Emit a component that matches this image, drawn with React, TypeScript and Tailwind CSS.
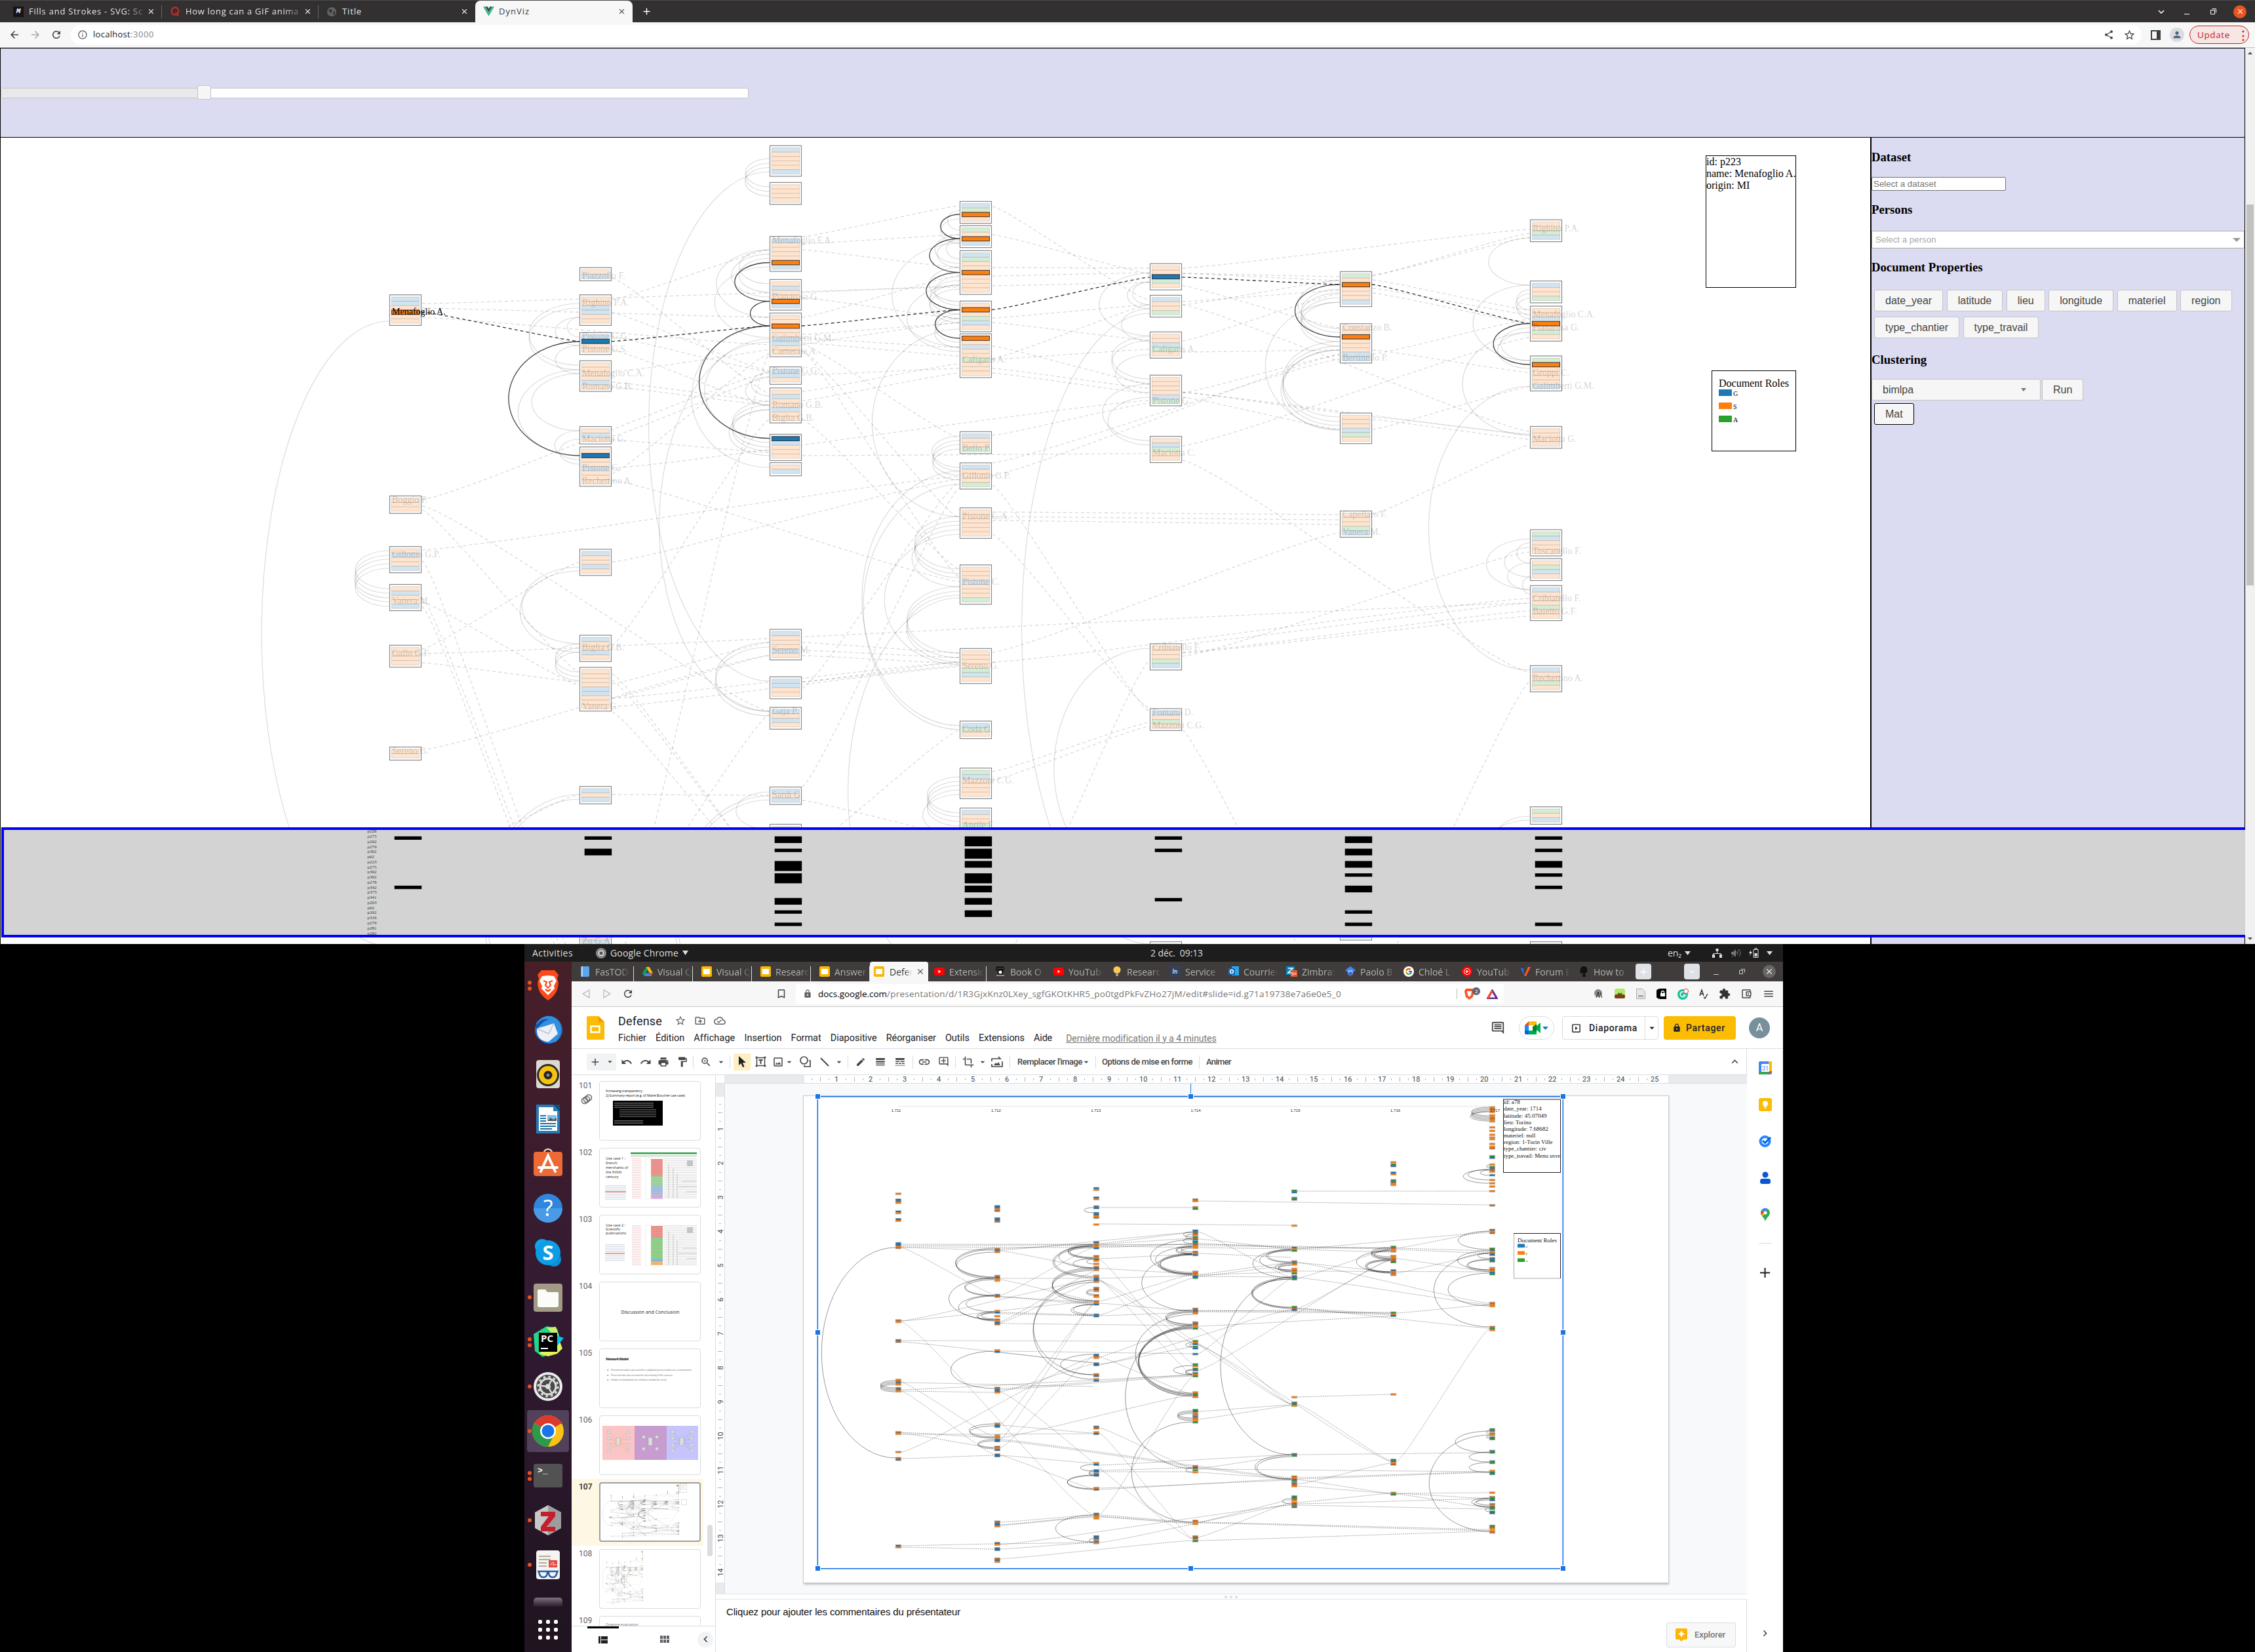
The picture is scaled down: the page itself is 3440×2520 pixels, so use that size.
import { useLayoutEffect, useRef, useState, type ReactNode } from "react";
import {
  MdAdd, MdArrowBack, MdArrowDropDown, MdArrowForward, MdClose, MdCrop, MdEdit,
  MdExtension, MdFormatPaint, MdInfoOutline, MdLineStyle, MdLineWeight, MdLink, MdLock,
  MdOutlineAddComment, MdOutlineCloudDone, MdOutlineDriveFileMove, MdOutlineImage,
  MdOutlineInsertComment, MdPerson, MdPrint, MdRedo, MdRefresh, MdShare, MdStarBorder,
  MdUndo, MdZoomIn, MdKeyboardArrowDown, MdKeyboardArrowLeft, MdKeyboardArrowRight, MdKeyboardArrowUp,
  MdOutlineBookmarkBorder, MdMenu, MdOutlineSlideshow, MdOutlineAccountBalanceWallet, MdLightbulb,
} from "react-icons/md";
import { FcGoogle } from "react-icons/fc";

/* Text spread over a fixed advance width, by adjusting the letter spacing. */
function Fit({ w, className = "", children }: { w: number; className?: string; children: string }) {
  const ref = useRef<HTMLSpanElement>(null);
  const [ls, setLs] = useState(0);
  useLayoutEffect(() => {
    const el = ref.current;
    if (el) setLs((w - el.getBoundingClientRect().width) / children.length);
  }, [w, children]);
  return (
    <span ref={ref} className={"inline-block shrink-0 whitespace-pre " + className} style={{ letterSpacing: ls + "px" }}>
      {children}
    </span>
  );
}

/* ------------------------------------------------------------------ */
/* Network chart                                                       */
/* ------------------------------------------------------------------ */

const COL = (i: number) => 594 + 290 * i;
const ROW = 6.67;
const FAINT: Record<string, string> = { b: "#d2e4f0", o: "#ffe5cf", g: "#d5ecd5" };
const STRONG: Record<string, string> = { B: "#1f77b4", O: "#ff7f0e" };

const BOXES: [number, number, string][] = [
  [0, 449.7, "bboOoo"], [0, 756.5, "ooo"], [0, 833.7, "oboob"], [0, 891.5, "oboob"], [0, 984.3, "oooo"], [0, 1139.5, "oo"],
  [1, 408.3, "ob"], [1, 449.7, "oobboo"], [1, 507.4, "bBoo"], [1, 550.3, "oooobo"], [1, 650.6, "obo"], [1, 681.7, "oBoobooo"],
  [1, 837.8, "boobo"], [1, 969, "boobo"], [1, 1018, "oooobbooo"], [1, 1199.6, "bob"], [1, 1417.5, "oobo"],
  [2, 222.2, "boooob"], [2, 278.4, "oooo"], [2, 360.6, "booooOb"], [2, 426.4, "obooOb"], [2, 477.5, "ooOoobboo"],
  [2, 559.6, "bbo"], [2, 591.8, "obooboo"], [2, 662.5, "Bbooo"], [2, 705.7, "ob"], [2, 960, "booobo"], [2, 1032.5, "bboo"],
  [2, 1079, "bobo"], [2, 1200.5, "bob"], [2, 1257.4, "boo"],
  [3, 307.3, "bgOo"], [3, 344.3, "goOb"], [3, 382.4, "bgooOoooo"], [3, 459.3, "oOogbo"], [3, 509.3, "Ooboogooo"],
  [3, 658.5, "boog"], [3, 706, "booog"], [3, 774.6, "oooooo"], [3, 861.7, "ooobooog"], [3, 989.3, "oooogbo"], [3, 1100, "bgo"],
  [3, 1171.6, "gboooo"], [3, 1232.6, "boogoo"],
  [4, 402.2, "ooBgo"], [4, 450.4, "boog"], [4, 506.3, "oobgo"], [4, 572.3, "oooobg"], [4, 665.6, "obgoo"], [4, 982, "ooogb"],
  [4, 1081, "bogo"], [4, 1436.5, "ooo"],
  [5, 414.3, "goOooob"], [5, 493.8, "ooOooobb"], [5, 630, "ooobgo"], [5, 779.5, "ooogb"], [5, 1394, "ooogb"],
  [6, 335.3, "oogb"], [6, 428.6, "boog"], [6, 467, "oobOogo"], [6, 543, "gOoooob"], [6, 650.5, "oooo"], [6, 808, "gbooo"],
  [6, 852.2, "ogbo"], [6, 893.3, "booogoo"], [6, 1015.4, "boogo"], [6, 1230.7, "gob"], [6, 1436.5, "ooo"],
];

const LABELS: [number, number, string][] = [
  [0, 762, "Boggio P."], [0, 845, "Gillonio G.P."], [0, 916, "Vanera M."], [0, 996, "Gallo G.F."], [0, 1145, "Sereno G."],
  [1, 420.5, "Piazzollo F."], [1, 461.5, "Righino P.A."], [1, 512.6, "Pistone G.G."], [1, 532, "Pistone G.S."],
  [1, 569, "Menafoglio C.A."], [1, 589, "Romano G.B."], [1, 669, "Maciotta G."], [1, 713, "Pistone G."], [1, 733, "Rechettino A."],
  [1, 987, "Biglia G.B."], [1, 1077.5, "Vanera G."], [1, 1435, "Zu G.A."],
  [2, 366.5, "Menafoglio F.A."], [2, 452, "Pianarosa G."], [2, 515.6, "Galimberti G.M."], [2, 535, "Camerata A."],
  [2, 565, "Pistone G.G."], [2, 617, "Romano G.B."], [2, 637, "Biglia G.B."], [2, 991, "Sereno M."], [2, 1084, "Gaja P."], [2, 1212, "Sardi G."],
  [3, 548, "Caligaris A."], [3, 683, "Bello P."], [3, 725, "Gillonio G.P."], [3, 787, "Pistone G.A."], [3, 887, "Pistone C."],
  [3, 1015.5, "Sereno G."], [3, 1112, "Coda G."], [3, 1190, "Mazzoni C.G."], [3, 1258, "Aprile F."],
  [4, 532.6, "Caligaris A."], [4, 611, "Pistone G."], [4, 690, "Maciotta C."], [4, 987.7, "Cribiatello F."], [4, 1086, "Fontana D."], [4, 1106, "Mazzoni C.G."],
  [5, 499, "Constanzo B."], [5, 545, "Bertinello P."], [5, 784, "Capellaro F."], [5, 811, "Vanera M."],
  [6, 348, "Righino P.A."], [6, 479, "Menafoglio C.A."], [6, 499, "Pianarosa G."], [6, 568.3, "Groppi C."], [6, 588, "Galimberti G.M."],
  [6, 669, "Maciotta G."], [6, 840, "Toscanello F."], [6, 912, "Cribiatello F."], [6, 932, "Baietto G.F."], [6, 1034, "Rechettino A."],
];

const ARCS: [number, number, number][] = [
  [0, 490, 1443], [0, 840, 898], [0, 847, 905], [0, 853, 912], [0, 860, 918], [0, 867, 925],
  [1, 463, 557], [1, 470, 564], [1, 484, 514], [1, 484, 527], [1, 527, 570], [1, 564, 695], [1, 570, 657], [1, 657, 701], [1, 670, 708],
  [1, 865, 982], [1, 871, 995], [1, 982, 1025], [1, 989, 1032], [1, 995, 1038], [1, 1212, 1560], [1, 1219, 1580],
  [2, 242, 285], [2, 249, 292], [2, 255.5, 299], [2, 262, 1039], [2, 381, 433], [2, 387.6, 453], [2, 381, 484], [2, 394, 446],
  [2, 407, 515], [2, 517, 1085], [2, 498, 713], [2, 522, 669], [2, 568, 604], [2, 575, 618], [2, 612, 675], [2, 618, 682],
  [2, 625, 688], [2, 625, 695], [2, 980, 1085], [2, 987, 1092], [2, 1208, 1265], [2, 1214, 1560], [2, 1220, 1580],
  [3, 321, 351], [3, 334, 371], [3, 358, 402], [3, 371, 529], [3, 367, 408], [3, 364, 395], [3, 408, 460], [3, 422, 466],
  [3, 428, 479], [3, 434, 486], [3, 441, 492], [3, 435, 536], [3, 479, 522], [3, 486, 530], [3, 502, 788], [3, 665, 713],
  [3, 672, 718], [3, 678, 725], [3, 685, 732], [3, 719, 1107], [3, 739, 1113], [3, 788, 868], [3, 795, 875], [3, 801, 881],
  [3, 808, 895], [3, 815, 1014], [3, 895, 996], [3, 902, 1003], [3, 908, 1010], [3, 912, 1502],
  [3, 1185, 1240], [3, 1192, 1246], [3, 1198, 1253], [3, 1205, 1260], [3, 1212, 1275],
  [4, 417, 512], [4, 430, 465], [4, 430, 471], [4, 471, 520], [4, 478, 1440], [4, 513, 578], [4, 520, 585], [4, 541, 599],
  [4, 586, 672], [4, 606, 679], [4, 989, 1356],
  [5, 428, 501], [5, 441, 507], [5, 447, 514], [5, 454, 521], [5, 461, 528], [5, 521, 636], [5, 528, 643], [5, 534, 649], [5, 534, 656], [5, 461, 655],
  [6, 363, 435], [6, 442, 473], [6, 448, 480], [6, 455, 486], [6, 435, 550], [6, 507, 664], [6, 500, 550], [6, 507, 562], [6, 589, 1022],
  [6, 822, 899], [6, 828, 859], [6, 835, 880], [6, 859, 900], [6, 880, 906], [6, 1245, 1300], [6, 1251, 1330],
];
const STRONG_ARCS: [number, number, number][] = [
  [1, 521, 695], [2, 400.5, 459.7], [2, 459.7, 497], [2, 497, 668.7], [3, 327, 364], [3, 364, 415.6], [3, 415.6, 472.5],
  [3, 472.5, 516], [5, 434, 514], [6, 493.5, 556],
];

const LINKS: [number, number, number, number][] = [
  [0, 463, 3, 438], [0, 470, 2, 484], [0, 484, 2, 526], [0, 762, 2, 569], [0, 772, 2, 1085], [0, 778, 1, 1025], [0, 839, 3, 727],
  [0, 855, 1, 1480], [0, 912, 1, 1500], [0, 925, 1, 1520], [0, 919, 1, 1045], [0, 990, 1, 858], [0, 997, 6, 920], [0, 1011, 1, 1040],
  [0, 1144, 2, 1000], [0, 1320, 1, 1212],
  [1, 424, 2, 600], [1, 457, 2, 381], [1, 477, 2, 566], [1, 514, 2, 567], [1, 534, 2, 620], [1, 567, 3, 492], [1, 583, 2, 612],
  [1, 590, 2, 618], [1, 665, 2, 575], [1, 671, 2, 690], [1, 714, 4, 611], [1, 733, 3, 887], [1, 722, 2, 540], [1, 857, 3, 731],
  [1, 984, 2, 640], [1, 1500, 2, 540], [1, 1043, 2, 980], [1, 1065, 2, 1000], [1, 1065, 3, 1010], [1, 1078, 3, 1017],
  [1, 1038, 2, 1330], [1, 1028, 2, 1330], [1, 1086, 2, 1350], [1, 1212, 2, 1213], [1, 1420, 2, 1090],
  [2, 361, 3, 314], [2, 372, 3, 358], [2, 381, 3, 408], [2, 446, 3, 436], [2, 454, 3, 486], [2, 484, 3, 420], [2, 516, 3, 530],
  [2, 523, 3, 543], [2, 510, 3, 493], [2, 525, 3, 668], [2, 535, 3, 790], [2, 535, 3, 880], [2, 572, 3, 562], [2, 597, 3, 555],
  [2, 611, 3, 569], [2, 640, 3, 868], [2, 695, 4, 692], [2, 980, 3, 996], [2, 992, 3, 1003], [2, 1000, 3, 1012], [2, 1040, 3, 1015],
  [2, 1040, 3, 1010], [2, 1050, 3, 735], [2, 1200, 3, 745], [2, 1221, 3, 1275], [2, 1300, 3, 1114],
  [3, 315, 4, 458], [3, 358, 4, 417], [3, 408, 4, 409], [3, 421, 4, 416], [3, 436, 4, 431], [3, 485, 4, 465], [3, 492, 4, 519],
  [3, 528, 4, 586], [3, 548, 4, 533], [3, 547, 4, 465], [3, 562, 4, 592], [3, 569, 4, 600], [3, 664, 4, 615], [3, 706, 5, 548],
  [3, 725, 5, 541], [3, 781, 5, 785], [3, 788, 5, 793], [3, 794, 5, 800], [3, 740, 4, 1085], [3, 815, 4, 1080], [3, 995, 5, 813],
  [3, 1010, 6, 913], [3, 1177, 4, 1102], [3, 1190, 4, 1108], [3, 1500, 4, 1008],
  [4, 409, 6, 350], [4, 417, 5, 422], [4, 417, 5, 428], [4, 436, 5, 500], [4, 460, 5, 443], [4, 465, 5, 427], [4, 465, 6, 658],
  [4, 520, 5, 448], [4, 537, 5, 534], [4, 598, 5, 629], [4, 606, 5, 655], [4, 599, 6, 662], [4, 599, 5, 541], [4, 680, 6, 515],
  [4, 702, 6, 1026], [4, 982, 6, 920], [4, 995, 6, 932], [4, 1001, 6, 842], [4, 996, 6, 940], [4, 1114, 5, 1550],
  [5, 420, 6, 362], [5, 420, 6, 356], [5, 427, 6, 473], [5, 440, 6, 480], [5, 447, 6, 493], [5, 540, 6, 487], [5, 534, 6, 568],
  [5, 636, 6, 663], [5, 640, 6, 670], [5, 655, 6, 590], [5, 784, 6, 679], [5, 1500, 6, 1040],
];
const STRONG_LINKS: [number, number, number, number][] = [
  [0, 476, 1, 520.7], [1, 520.7, 2, 497], [2, 497, 3, 472.5], [3, 472.5, 4, 422.8], [4, 422.8, 5, 434], [5, 434, 6, 493.5],
];

const bulge = (h: number) => 51 * Math.log(h) - 155;
const arcPath = (x: number, a: number, b: number, rx: number) => `M${x} ${a}A${rx} ${(b - a) / 2} 0 0 0 ${x} ${b}`;
const linkPath = (x1: number, y1: number, x2: number, y2: number) => {
  const k = (x2 - x1) * 0.12;
  return `M${x1} ${y1}C${x1 + k} ${y1 + (y2 - y1) * 0.04} ${x2 - k} ${y2 - (y2 - y1) * 0.04} ${x2} ${y2}`;
};

function NetworkChart() {
  return (
    <svg className="block" width="2852" height="1230" viewBox="1 210 2852 1230" fontFamily="Liberation Serif, serif">
      <g fill="none" stroke="#000" strokeOpacity="0.14" strokeWidth="1.2">
        {ARCS.map(([c, a, b], i) => <path key={i} d={arcPath(COL(c), a, b, bulge(b - a))} />)}
      </g>
      <g fill="none" stroke="#000" strokeOpacity="0.15" strokeWidth="1.3" strokeDasharray="5 4">
        {LINKS.map(([a, y1, b, y2], i) => <path key={i} d={linkPath(COL(a) + 50, y1, COL(b) - 1, y2)} />)}
      </g>
      {BOXES.map(([c, y, rows], i) => (
        <g key={i}>
          <rect x={COL(c) + 0.5} y={y} width="48" height={(rows.length + 1) * ROW} fill="#fff" stroke="#888" strokeWidth="1.2" />
          {rows.split("").map((r, k) => FAINT[r] && (
            <rect key={k} x={COL(c) + 3.5} y={y + 3.3 + k * ROW} width="42" height={ROW} fill={FAINT[r]} stroke="#000" strokeOpacity="0.13" strokeWidth="1" />
          ))}
        </g>
      ))}
      <g fill="none" stroke="#444" strokeWidth="1.3">
        {STRONG_ARCS.map(([c, a, b], i) => <path key={i} d={arcPath(COL(c), a, b, bulge(b - a))} />)}
      </g>
      <g fill="none" stroke="#333" strokeWidth="1.3" strokeDasharray="5 4">
        {STRONG_LINKS.map(([a, y1, b, y2], i) => <path key={i} d={linkPath(COL(a) + 49, y1, COL(b), y2)} />)}
      </g>
      {BOXES.map(([c, y, rows]) => rows.split("").map((r, k) => STRONG[r] && (
        <rect key={c + "-" + y + k} x={COL(c) + 3.5} y={y + 3.3 + k * ROW} width="42" height={ROW} fill={STRONG[r]} stroke="#333" strokeWidth="1" />
      )))}
      <g fontSize="14" fill="#000" fillOpacity="0.2">
        {LABELS.map(([c, y, t], i) => <text key={i} x={COL(c) + 4} y={y + 4.5}>{t}</text>)}
      </g>
      <text x="598" y="480" fontSize="14">Menafoglio A.</text>

      <rect x="2602.5" y="237.5" width="137" height="201" fill="#fff" stroke="#000" />
      <g fontSize="16">
        <text x="2603" y="252">id: p223</text>
        <text x="2603" y="270">name: Menafoglio A.</text>
        <text x="2603" y="288">origin: MI</text>
      </g>
      <rect x="2611.5" y="565.5" width="128" height="122.5" fill="#fff" stroke="#000" />
      <text x="2622" y="590" fontSize="16">Document Roles</text>
      <rect x="2622" y="594" width="20" height="10" fill="#1f77b4" />
      <rect x="2622" y="614" width="20" height="10" fill="#ff7f0e" />
      <rect x="2622" y="634" width="20" height="10" fill="#2ca02c" />
      <g fontSize="10"><text x="2644" y="604">G</text><text x="2644" y="624">S</text><text x="2644" y="644">A</text></g>
    </svg>
  );
}

/* Overview strip: per column, [slot, units]. */
const MINI: [number, number][][] = [
  [[0, 1], [4, 1]],
  [[0, 1], [1, 2]],
  [[0, 2], [1, 1], [2, 3], [3, 3], [5, 2], [6, 1], [7, 1]],
  [[0, 3], [1, 3], [2, 2], [3, 3], [4, 2], [5, 2], [6, 2]],
  [[0, 1], [1, 1], [5, 1]],
  [[0, 2], [1, 2], [2, 2], [3, 1], [4, 2], [6, 1], [7, 1]],
  [[0, 1], [1, 1], [2, 2], [3, 1], [4, 1], [7, 1]],
];
const MINI_IDS = ["p226", "p275", "p202", "p279", "p302", "p62", "p223", "p275", "p302", "p392", "p278", "p342", "p373", "p341", "p203", "p62", "p202", "p316", "p279", "p281", "p282"];

function Overview() {
  return (
    <div className="absolute left-[2px] top-[1189px] h-[168px] w-[3423px] border-4 border-r-0 border-[#00f] bg-[#d3d3d3]">
      <svg className="block overflow-visible" width="3410" height="160" viewBox="6 1266 3410 160" fontFamily="Liberation Serif, serif">
        {MINI_IDS.map((t, i) => <text key={i} x="560.5" y={1270.3 + i * 7.76} fontSize="7" fill="#333">{t}</text>)}
        {MINI.map((col, c) => col.map(([k, n]) => (
          <rect key={c + "-" + k} x={601.7 + 290 * c} y={1275.8 + 18.8 * k} width="41.5" height={5 * n + 0.2} />
        )))}
      </svg>
    </div>
  );
}

/* ------------------------------------------------------------------ */
/* Upper browser window                                                */
/* ------------------------------------------------------------------ */

function TopTab({ icon, title, tw, first = false, sep = true }: { icon: ReactNode; title: string; tw: number; first?: boolean; sep?: boolean }) {
  return (
    <div className={"flex h-full items-center " + (first ? "w-[247px] pl-5" : "w-[239px] pl-3")}>
      <div className="flex h-4 w-4 items-center justify-center">{icon}</div>
      <div className={"ml-2 w-[176px] whitespace-nowrap text-[13px] text-[#e8e8e8] " + (tw > 100 ? "[mask-image:linear-gradient(to_right,#000_85%,#0003)]" : "")}><Fit w={tw}>{title}</Fit></div>
      <MdClose className="ml-1 text-[13px] text-white" />
      <div className={"ml-auto h-5 w-px " + (sep ? "bg-[#666]" : "")} />
    </div>
  );
}

function PanelButton({ children, dark = false }: { children: string; dark?: boolean }) {
  return (
    <div className={"flex h-[33px] items-center rounded-[3px] border bg-[#f6f6f6] px-4 text-[16px] leading-none text-[#454545] " + (dark ? "border-black" : "border-[#c5c5c5]")}>{children}</div>
  );
}

const Heading = ({ className, children }: { className: string; children: string }) => (
  <div className={"h-[21px] font-['Liberation_Serif',serif] text-[18.720px] font-bold leading-[21px] " + className}>{children}</div>
);

function TopWindow() {
  return (
    <div className="flex h-[1440px] w-[3440px] flex-col bg-white">
      <div className="flex h-[34px] items-center border-t border-[#4a4849] bg-[#323031] font-['Open_Sans',sans-serif]">
        <TopTab first tw={174} title="Fills and Strokes - SVG: Sc" icon={<div className="flex h-4 w-4 items-center justify-center bg-[#15141a] font-mono text-[11px] font-bold italic text-white">M</div>} />
        <TopTab tw={173} title="How long can a GIF anima" icon={<svg width="14" height="16" viewBox="0 0 14 16"><ellipse cx="7" cy="7" rx="5.3" ry="5.8" fill="none" stroke="#b92b27" strokeWidth="2.6" /><path d="M7 9.500c3 0 3 5 6 4.500" fill="none" stroke="#b92b27" strokeWidth="2" /></svg>} />
        <TopTab sep={false} tw={30} title="Title" icon={<svg width="14" height="14"><circle cx="7" cy="7" r="7" fill="#5f6368" /><path d="M2 4l4-1 2 3-3 3zM9 8l3-2v4l-3 2z" fill="#323031" /></svg>} />
        <div className="flex h-full w-[240px] items-center rounded-t-[8px] bg-[#f7f7f7] pl-[12px]">
          <svg width="17" height="15" viewBox="0 0 17 15"><path d="M0 0h3.500l5 8.600L13.500 0H17L8.500 14.700z" fill="#41b883" /><path d="M3.500 0h3.200l1.800 3.200L10.300 0h3.200l-5 8.600z" fill="#35495e" /></svg>
          <div className="ml-[7px] w-[181px] text-[13px] text-[#3c4043]"><Fit w={47}>DynViz</Fit></div>
          <MdClose className="text-[13px] text-[#3c4043]" />
        </div>
        <MdAdd className="ml-[13px] text-[17px] text-white" />
        <MdKeyboardArrowDown className="ml-auto text-[18px] text-white" />
        <div className="ml-[26px] mt-2 h-[1.500px] w-2 bg-white" />
        <svg className="ml-[32px]" width="9" height="9"><path d="M.5 2.500h6v6h-6zM2.500.5h6v6" fill="none" stroke="#fff" /></svg>
        <div className="ml-[26px] mr-[13px] flex h-5 w-5 items-center justify-center rounded-full bg-[#e95420]"><MdClose className="text-[13px] text-white" /></div>
      </div>
      <div className="flex h-[39px] items-center border-b border-[#c4c4c4] bg-[#f7f7f7] font-['Open_Sans',sans-serif]">
        <MdArrowBack className="ml-[13px] text-[18px] text-[#3c4043]" />
        <MdArrowForward className="ml-[14px] text-[18px] text-[#a6a6a6]" />
        <MdRefresh className="ml-[14px] text-[18px] text-[#3c4043]" />
        <div className="ml-[13px] flex h-[30px] w-[3159px] items-center rounded-[15px] bg-white pl-[10px] pr-[9px]">
          <MdInfoOutline className="text-[16px] text-[#5f6368]" />
          <div className="ml-2 flex text-[13px] text-[#202124]"><Fit w={57}>localhost</Fit><Fit w={36} className="text-[#80868b]">:3000</Fit></div>
          <MdShare className="ml-auto text-[16px] text-[#444]" />
          <MdStarBorder className="ml-[14px] text-[19px] text-[#444]" />
        </div>
        <div className="ml-[14px] h-[15px] w-[15px] border-[2.500px] border-r-[6px] border-[#3c4043]" />
        <div className="ml-[14px] flex h-[22px] w-[22px] items-center justify-center rounded-full bg-[#dadce0]"><MdPerson className="text-[16px] text-[#54617a]" /></div>
        <div className="ml-2 flex h-[28px] w-[91px] items-center rounded-full border border-[#c5221f] bg-[#f6e6e6] pl-[11px] text-[13.500px] text-[#c5221f]">
          <Fit w={50}>Update</Fit><span className="ml-[11px] text-[18px] font-bold leading-none">⋮</span>
        </div>
      </div>
      <div className="relative flex h-[1367px]">
        <div className="w-[3425px] border-l border-black">
          <div className="flex h-[137px] flex-col border-y border-r border-black bg-[#dbdbf1]">
            <div className="relative mt-[60px] h-4 w-[1141px] rounded-[3px] border border-[#c5c5c5] bg-white">
              <div className="h-full w-[300px] bg-[#e9e9e9]" />
              <div className="absolute left-[299px] top-[-5px] h-[22px] w-[21px] rounded-[3px] border border-[#c5c5c5] bg-[#f6f6f6]" />
            </div>
          </div>
          <div className="flex h-[1230px]">
            <div className="w-[2852px]"><NetworkChart /></div>
            <div className="flex w-[572px] flex-col border-l-2 border-r border-black bg-[#dbdbf1] font-['Liberation_Sans',sans-serif]">
              <Heading className="mt-[19px]">Dataset</Heading>
              <div className="mt-5 flex h-[21px] w-[205px] items-center rounded-[2px] border border-[#767676] bg-white pl-[2px] text-[13.330px] leading-none text-[#757575]">Select a dataset</div>
              <Heading className="mt-[18px]">Persons</Heading>
              <div className="mt-[22px] flex h-[27px] items-center justify-between border border-[#aaa] bg-white pl-[5px] pr-[5px] text-[13.330px] leading-none text-[#a9a9a9]">
                Select a person
                <svg width="12" height="6"><path d="M0 0h12L6 6z" fill="#999" /></svg>
              </div>
              <Heading className="mt-[18px]">Document Properties</Heading>
              <div className="ml-1 mt-6 flex gap-[5.500px]">
                <PanelButton>date_year</PanelButton><PanelButton>latitude</PanelButton><PanelButton>lieu</PanelButton>
                <PanelButton>longitude</PanelButton><PanelButton>materiel</PanelButton><PanelButton>region</PanelButton>
              </div>
              <div className="ml-1 mt-2 flex gap-[5.500px]"><PanelButton>type_chantier</PanelButton><PanelButton>type_travail</PanelButton></div>
              <Heading className="mt-[22px]">Clustering</Heading>
              <div className="mt-[19px] flex gap-[2px]">
                <div className="flex h-[33px] w-[258px] items-center justify-between rounded-[3px] border border-[#c5c5c5] bg-[#f6f6f6] pl-4 pr-[21px] text-[16px] text-[#454545]">
                  bimlpa<svg width="8" height="5"><path d="M0 0h8L4 5z" fill="#777" /></svg>
                </div>
                <PanelButton>Run</PanelButton>
              </div>
              <div className="ml-1 mt-1 flex"><PanelButton dark>Mat</PanelButton></div>
            </div>
          </div>
        </div>
        <div className="flex w-[15px] flex-col items-center justify-between bg-[#f1f1f1] py-[6px]">
          <svg width="7" height="4"><path d="M0 4h7L3.500 0z" fill="#505050" /></svg>
          <div className="mb-auto mt-[229px] h-[581px] w-[11px] bg-[#c1c1c1]" />
          <svg width="7" height="4"><path d="M0 0h7L3.500 4z" fill="#505050" /></svg>
        </div>
        <Overview />
      </div>
    </div>
  );
}

/* ------------------------------------------------------------------ */
/* Slide graph                                                         */
/* ------------------------------------------------------------------ */

const SX = [1370.4, 1521.4, 1672.4, 1823.5, 1974.5, 2125.6, 2276.4];
const PAL: Record<string, string> = { b: "#1f6ca6", o: "#ee7a12", g: "#2b8a35", d: "#b3672a", n: "#50697a" };

/* Per column: [centre y, stack of coloured bars]. */
const SBOX: [number, string][][] = [
  [[1821, "o"], [1832.4, "bno"], [1849.3, "bo"], [1861, "bo"], [1900, "bbod"], [2015.4, "do"], [2045.6, "nd"], [2108.4, "odno"], [2120, "ndo"], [2186, "do"], [2215, "o"], [2225.5, "dn"], [2359, "bo"]],
  [[1843.5, "bnod"], [1861, "bnd"], [1907.5, "dno"], [1950, "dnoo"], [1976.7, "nd"], [2001, "ob"], [2007.7, "o"], [2016.5, "dobd"], [2061, "ob"], [2120.6, "dnbo"], [2174, "onb"], [2192, "ood"], [2197, "nb"], [2209.4, "dob"], [2220, "nb"], [2324.7, "dnbo"], [2355, "no"], [2363, "nb"], [2380, "dno"]],
  [[1813.7, "bo"], [1828, "bo"], [1841.6, "nb"], [1854, "bnod"], [1868, "o"], [1899.4, "bodob"], [1919.7, "dono"], [1928, "o"], [1935, "dno"], [1950.7, "odbno"], [1967, "dno"], [1977, "do"], [1987.4, "dob"], [2006.6, "nb"], [2069, "bdo"], [2081, "nb"], [2097.7, "dn"], [2105, "ob"], [2177.6, "nd"], [2186, "ob"], [2233, "ob"], [2244, "bn"], [2249.7, "nb"], [2271, "on"], [2312.7, "bdoo"], [2346, "bnd"], [2352.7, "bo"]],
  [[1831, "do"], [1842.8, "dg"], [1880.7, "bndo"], [1889.5, "gdb"], [1898.7, "bgdoo"], [1912, "dob"], [1944.6, "odobg"], [2000, "dndo"], [2022, "dnoog"], [2048, "gob"], [2055.6, "gb"], [2065.5, "b"], [2082.4, "gd"], [2089, "gn"], [2097, "nog"], [2127.5, "ogno"], [2154.3, "gbod"], [2165, "ndoog"], [2240, "dbog"], [2245.7, "o"], [2322.3, "doo"], [2347.3, "dnog"]],
  [[1817.5, "gb"], [1828.6, "gn"], [1869.6, "o"], [1905.5, "nog"], [1926.6, "dno"], [1939, "odog"], [1949, "nbg"], [1996, "gdb"], [2131.3, "o"], [2142, "ngo"], [2219.4, "ng"], [2256, "dong"], [2264.7, "ndo"], [2286.3, "gndo"], [2295.3, "ogdn"]],
  [[1773, "o"], [1777.5, "gb"], [1790, "bo"], [1804, "gnoo"], [1905.4, "gdoo"], [1920.6, "ooddg"], [1941.3, "nodo"], [2004.8, "gob"], [2127, "o"], [2230.4, "gnod"], [2278.6, "dg"]],
  [[1692.7, "odoo"], [1706, "oodoo"], [1719.7, "o"], [1725, "o"], [1731, "o"], [1736.5, "oo"], [1745, "o"], [1750.5, "od"], [1765, "gb"], [1776.4, "o"], [1783.7, "gndo"], [1792.6, "b"], [1800, "o"], [1805, "o"], [1810, "o"], [1817, "o"], [1838.7, "d"], [1878.5, "nod"], [1909.4, "gnodb"], [1921.7, "nbg"], [1939, "odobg"], [1990, "doo"], [2026.6, "dgo"], [2181.5, "gn"], [2187.7, "do"], [2194, "ng"], [2214.6, "ng"], [2230.4, "ng"], [2246, "ogb"], [2277, "o"], [2286, "dgb"], [2298, "dobg"], [2307, "gb"], [2330, "gdo"], [2336.4, "od"]],
];

const SARC: [number, number, number][] = [
  [0, 1903, 2224], [0, 2106, 2117], [0, 2108, 2119], [0, 2110, 2121], [0, 2112, 2123],
  [1, 1904, 1948], [1, 1906, 1949], [1, 1910, 1951], [1, 1950, 1976], [1, 1952, 1977], [1, 1949, 2013], [1, 1977, 2001], [1, 1976, 2013], [1, 2001, 2014], [1, 2003, 2015], [1, 2002, 2012], [1, 2061, 2118], [1, 2172, 2192], [1, 2175, 2194], [1, 2196, 2208], [1, 2198, 2210],
  [2, 1842, 1850], [2, 1898, 1918], [2, 1900, 1920], [2, 1901, 1919], [2, 1900, 1934], [2, 1901, 1949], [2, 1903, 1947], [2, 1920, 1935], [2, 1921, 1928], [2, 1934, 1984], [2, 1936, 1985], [2, 1938, 1988], [2, 1953, 2097], [2, 1956, 2104], [2, 1967, 1974], [2, 1969, 1976], [2, 1990, 2005], [2, 1990, 2007], [2, 2066, 2097], [2, 2234, 2244], [2, 2243, 2249], [2, 2245, 2251], [2, 2250, 2271], [2, 2251, 2272], [2, 2311, 2352], [2, 2347, 2353],
  [3, 1879, 1887], [3, 1883, 1890], [3, 1889, 1897], [3, 1900, 1912], [3, 1902, 1914], [3, 1904, 1913], [3, 1901, 1910], [3, 1902, 1941], [3, 1913, 1943], [3, 1914, 1944], [3, 1912, 1945], [3, 1891, 1943], [3, 1914, 2000], [3, 2000, 2021], [3, 1998, 2020], [3, 2002, 2023], [3, 2024, 2125], [3, 2026, 2127], [3, 2027, 2129], [3, 2025, 2130], [3, 2005, 2127], [3, 2022, 2240], [3, 2048, 2055], [3, 2050, 2054], [3, 2083, 2097], [3, 2090, 2097], [3, 2089, 2096], [3, 2152, 2163], [3, 2154, 2165], [3, 2156, 2167], [3, 2169, 2322], [3, 2239, 2246],
  [4, 1906, 1926], [4, 1907, 1925], [4, 1908, 1937], [4, 1928, 1938], [4, 1927, 1939], [4, 1930, 1940], [4, 1906, 1949], [4, 1949, 1995], [4, 1951, 1996], [4, 1951, 1994], [4, 1948, 2219], [4, 2219, 2257], [4, 2222, 2256], [4, 2286, 2294],
  [5, 1903, 1917], [5, 1905, 1919], [5, 1907, 1921], [5, 1908, 1920], [5, 1921, 1941], [5, 1923, 1942], [5, 1922, 1940], [5, 1908, 1941],
  [6, 1689, 1702], [6, 1691, 1704], [6, 1693, 1706], [6, 1695, 1708], [6, 1696, 1710], [6, 1777, 1781], [6, 1784, 1800], [6, 1785, 1793], [6, 1784, 1805], [6, 1878, 1906], [6, 1911, 1920], [6, 1922, 1939], [6, 1921, 1937], [6, 1908, 1937], [6, 1912, 2024], [6, 1942, 1992], [6, 2182, 2187], [6, 2183, 2216], [6, 2190, 2194], [6, 2215, 2230], [6, 2231, 2246], [6, 2189, 2336], [6, 2286, 2296], [6, 2285, 2298], [6, 2288, 2299], [6, 2300, 2306],
];

const SLINK: [number, number, number, number][] = [
  [0, 1898, 2, 1898], [0, 1900, 3, 1898], [0, 1902, 2, 1903], [0, 1903, 1, 1907], [0, 1903, 1, 1975], [0, 2015, 2, 1952], [0, 2015, 2, 1985], [0, 2016, 2, 2311],
  [0, 2045, 3, 2046], [0, 2047, 2, 2078], [0, 2108, 1, 2192], [0, 2109, 2, 2115], [0, 2120, 3, 2098], [0, 2122, 1, 2124], [0, 2122, 1, 2219], [0, 2185, 1, 2193],
  [0, 2188, 2, 2187], [0, 2186, 1, 2209], [0, 2215, 2, 2070], [0, 2225, 1, 2220], [0, 2358, 1, 2355], [0, 2360, 1, 2363],
  [1, 1905, 2, 1898], [1, 1907, 3, 1880], [1, 1908, 2, 1934], [1, 1950, 2, 1950], [1, 1952, 2, 1984], [1, 1976, 2, 1903], [1, 1978, 2, 1987], [1, 1978, 2, 1990],
  [1, 2002, 2, 2006], [1, 2004, 2, 2007], [1, 2016, 2, 1940], [1, 2018, 2, 1955], [1, 2019, 3, 2022], [1, 2061, 3, 2065], [1, 2063, 2, 2079], [1, 2118, 3, 2097],
  [1, 2120, 3, 2099], [1, 2123, 2, 2081], [1, 2123, 3, 2347], [1, 2174, 2, 2186], [1, 2173, 2, 1990], [1, 2193, 3, 2128], [1, 2196, 2, 1990], [1, 2198, 4, 2256],
  [1, 2209, 2, 2069], [1, 2196, 4, 2254], [1, 2220, 2, 2232], [1, 2220, 2, 2271], [1, 2322, 2, 2311], [1, 2326, 2, 2313], [1, 2327, 2, 2314], [1, 2355, 2, 2353],
  [1, 2356, 4, 2296], [1, 2363, 2, 2353], [1, 2378, 3, 2350],
  [2, 1842, 3, 1842], [2, 1867, 4, 1869], [2, 1897, 3, 1880], [2, 1898, 3, 1889], [2, 1900, 3, 1898], [2, 1901, 4, 1905], [2, 1903, 3, 1898], [2, 1920, 3, 1913],
  [2, 1921, 3, 2080], [2, 1935, 3, 1943], [2, 1950, 3, 1946], [2, 1952, 3, 2097], [2, 1954, 3, 2048], [2, 1953, 4, 2142], [2, 1985, 3, 1944], [2, 1988, 3, 2000],
  [2, 2006, 3, 1950], [2, 2007, 3, 2002], [2, 2070, 3, 2020], [2, 2070, 3, 2127], [2, 2081, 3, 2055], [2, 2082, 4, 1998], [2, 2178, 3, 2240], [2, 2186, 3, 2347],
  [2, 2235, 4, 2219], [2, 2243, 3, 2239], [2, 2245, 3, 2245], [2, 2272, 4, 2256], [2, 2270, 4, 2258], [2, 2311, 3, 2322], [2, 2313, 3, 2323], [2, 2314, 3, 2324],
  [2, 2353, 4, 2295], [2, 2311, 3, 2100],
  [3, 1832, 6, 1838], [3, 1879, 4, 1949], [3, 1890, 4, 1905], [3, 1897, 4, 1903], [3, 1898, 5, 1904], [3, 1900, 5, 1905], [3, 1912, 4, 1918], [3, 1944, 4, 1926],
  [3, 1945, 4, 1940], [3, 1947, 4, 1948], [3, 1947, 4, 1930], [3, 1999, 5, 2002], [3, 2000, 4, 1999], [3, 2001, 5, 2003], [3, 2023, 5, 2008], [3, 2050, 4, 2142],
  [3, 2052, 5, 2229], [3, 2025, 4, 2142], [3, 2065, 4, 1950], [3, 2090, 5, 1922], [3, 2153, 4, 2143], [3, 2165, 4, 2144], [3, 2240, 4, 2220], [3, 2241, 6, 2245],
  [3, 2246, 4, 2256], [3, 2323, 6, 2335], [3, 2322, 6, 2333], [3, 2345, 4, 2292], [3, 2350, 6, 2336], [3, 2322, 4, 2288],
  [4, 1817, 6, 1817], [4, 1905, 6, 1880], [4, 1904, 5, 1903], [4, 1906, 5, 1910], [4, 1926, 6, 1988], [4, 1926, 5, 1940], [4, 1939, 6, 1940], [4, 1949, 6, 1990],
  [4, 1950, 5, 1905], [4, 1996, 5, 1922], [4, 1996, 5, 2004], [4, 1998, 5, 2006], [4, 1996, 6, 2026], [4, 2131, 5, 2127], [4, 2142, 5, 2228], [4, 2219, 6, 2216],
  [4, 2254, 6, 2245], [4, 2256, 6, 2246], [4, 2257, 5, 2278], [4, 2264, 5, 2232], [4, 2267, 5, 2278], [4, 2294, 6, 2286], [4, 2296, 6, 2302], [4, 2292, 5, 2278],
  [5, 1904, 6, 1878], [5, 1904, 6, 1908], [5, 1906, 6, 1912], [5, 1920, 6, 1940], [5, 1942, 6, 1911], [5, 2003, 6, 1990], [5, 2230, 6, 2027], [5, 2278, 6, 2277],
  [5, 2279, 6, 2300], [5, 2278, 6, 2286],
];

/* In the film strip the graph is drawn with wider strokes and without its year labels. */
function SlideGraph({ mini = false }: { mini?: boolean }) {
  return (
    <g>
      <path d="M1370 1687.500H2281" stroke="#ececec" strokeWidth="1.5" />
      <g fill="none" stroke="#000" strokeOpacity={mini ? 0.2 : 0.45} strokeWidth={mini ? 4 : 0.9}>
        {SARC.map(([c, a, b], i) => <path key={i} d={arcPath(SX[c] - 4, a, b, Math.max(5, 26.7 * Math.log(b - a) - 41))} />)}
      </g>
      <g fill="none" stroke="#000" strokeOpacity={mini ? 0.13 : 0.4} strokeWidth={mini ? 4 : 0.8} strokeDasharray={mini ? undefined : "2 1"}>
        {SLINK.map(([a, y1, b, y2], i) => <path key={i} d={linkPath(SX[a] + 4.5, y1, SX[b] - 4.5, y2)} />)}
      </g>
      {SBOX.map((col, c) => col.map(([y, s]) => {
        const h = s.length * 2.3;
        return (
          <g key={c + "-" + y}>
            <rect x={SX[c] - 4.7} y={y - h / 2 - 0.8} width="9.4" height={h + 1.6} fill="#c4c4c4" />
            {s.split("").map((k, i) => <rect key={i} x={SX[c] - 3.8} y={y - h / 2 + i * 2.3} width="7.6" height="2.35" fill={PAL[k]} />)}
          </g>
        );
      }))}
      {!mini && (
        <g fontFamily="Liberation Sans, sans-serif" fontSize="6" textAnchor="middle" fill="#222">
          {[1367, 1519.4, 1671.8, 1824, 1976, 2128.6, 2280.5].map((x, i) => <text key={i} x={x} y="1696">{"1,71" + (i + 1)}</text>)}
        </g>
      )}
    </g>
  );
}

const INFO = ["id: a78", "date_year: 1714", "latitude: 45.07049", "lieu: Torino", "longitude: 7.68682", "materiel: null", "region: 1-Turin Ville", "type_chantier: civ"];

function SlideCanvas() {
  return (
    <svg className="block" width="1558" height="778" viewBox="1106 1653 1558 778">
      <defs><filter id="soft" x="-5%" y="-5%" width="110%" height="110%"><feGaussianBlur stdDeviation="1.5" /></filter></defs>
      <rect x="1226" y="1672" width="1320" height="745" fill="#bbb" filter="url(#soft)" />
      <rect x="1225.500" y="1671.500" width="1320" height="743" fill="#fff" stroke="#cfcfcf" />
      <SlideGraph />
      <g fontFamily="Liberation Serif, serif" fill="#111">
        <rect x="2293.500" y="1677" width="87" height="111.500" fill="#fff" stroke="#222" />
        <g fontSize="9">
          {INFO.map((t, i) => <text key={t} x="2294" y={1684.3 + i * 10.1}>{t}</text>)}
          <text x="2294" y="1766" textLength="86">type_travail: Menu uvre</text>
        </g>
        <rect x="2309.500" y="1881.500" width="71" height="68.500" fill="#fff" stroke="#aaa" />
        <path d="M2309 1881.500H2381M2380.500 1881V1950" stroke="#222" />
        <text x="2315" y="1895" fontSize="9" textLength="60">Document Roles</text>
        <rect x="2315" y="1897.500" width="11" height="5.500" fill="#1f77b4" />
        <rect x="2315" y="1908.500" width="11" height="5.500" fill="#ff7f0e" />
        <rect x="2315" y="1919.500" width="11" height="5.500" fill="#2ca02c" />
        <g fontSize="5"><text x="2327" y="1903">G</text><text x="2327" y="1914">S</text><text x="2327" y="1925">A</text></g>
      </g>
      <path d="M1816.500 1653v19" stroke="#1a73e8" />
      <rect x="1247.300" y="1672.800" width="1137" height="720" fill="none" stroke="#1a73e8" strokeWidth="1.6" />
      {[1247.5, 1816.5, 2384.5].map((x) => [1672.5, 2032.5, 2392.5].map((y) =>
        x === 1816.5 && y === 2032.5 ? null : <rect key={x + "-" + y} x={x - 4} y={y - 4} width="8" height="8" fill="#1a73e8" stroke="#fff" strokeWidth="1" />
      ))}
    </svg>
  );
}

/* ------------------------------------------------------------------ */
/* Desktop dock                                                        */
/* ------------------------------------------------------------------ */

const DOCK: { dots: number; active?: boolean; icon: ReactNode }[] = [
  { dots: 2, icon: <g><path d="M12 1h20l6 7-2 6 2 6c-1 12-5 20-16 27C11 40 7 32 6 20l2-6-2-6z" fill="#fb4a1d" /><path d="M13 10l9-1 9 1 4 7-4 8 1 4-5 5-5 5-5-5-5-5 1-4-4-8z" fill="#fff" /><path d="M15 17l5 2-2 5 4 4 4-4-2-5 5-2M18 30l4 3 4-3" fill="none" stroke="#fb4a1d" strokeWidth="2.200" /></g> },
  { dots: 0, icon: <g><circle cx="23" cy="24" r="21" fill="#1f6fc9" /><path d="M4 14C12 2 26-1 36 8c8 8 8 22 0 32-6 6-14 6-20 2" fill="#2f8fe0" /><path d="M5 22l26-8 6 16-14 12C10 42 4 34 5 22z" fill="#eef0f6" /><path d="M5 22l18 8 8-16" fill="none" stroke="#b9bfd0" strokeWidth="1.500" /><path d="M3 20c4-10 12-14 20-12-8 2-12 8-18 14z" fill="#1551a6" /><path d="M6 34c4 10 18 14 26 8l-2 4c-8 3-20 0-24-12z" fill="#2b1d63" /></g> },
  { dots: 0, icon: <g><rect x="4" y="2" width="36" height="43" rx="4" fill="#dcd9d0" /><circle cx="22" cy="25" r="17" fill="#2b2b2b" /><circle cx="22" cy="25" r="14" fill="#f5c211" /><circle cx="22" cy="25" r="6.500" fill="#222" /><circle cx="22" cy="25" r="2.500" fill="#888" /></g> },
  { dots: 0, icon: <g><path d="M4 2h26l10 10v34H4z" fill="#2a7bb5" /><path d="M8 6h22v6h6v30H8z" fill="#fff" /><path d="M30 2h10v10z" fill="#124d7c" /><path d="M10 19h9M10 23h9M10 27h9M10 31h24M10 35h24M10 39h18" stroke="#1d6ea8" strokeWidth="2" /><rect x="21" y="18" width="14" height="9" fill="#7fc2ea" /><path d="M21 27l5-5 4 3 5-3v5z" fill="#555" /></g> },
  { dots: 0, icon: <g><path d="M16 8c0-8 12-8 12 0" fill="none" stroke="#f4c9b4" strokeWidth="2.500" /><rect y="6" width="44" height="37" rx="4" fill="#ee6a34" /><path d="M11 36l11-24 11 24M8 30h28" fill="none" stroke="#fff" strokeWidth="4" strokeLinecap="round" /></g> },
  { dots: 0, icon: <g><circle cx="22" cy="24" r="22" fill="#2f86dc" /><path d="M0 24a22 22 0 0 0 44 0z" fill="#4a9be6" /><text x="22" y="36" fontSize="34" fill="#fff" textAnchor="middle" fontFamily="Open Sans, sans-serif">?</text></g> },
  { dots: 0, icon: <g><circle cx="22" cy="24" r="19" fill="#0b9fe6" /><circle cx="13" cy="14" r="11" fill="#0ea5ea" /><circle cx="31" cy="34" r="11" fill="#0a8fd8" /><circle cx="22" cy="24" r="18" fill="#0d9de6" /><text x="22" y="35" fontSize="31" fontWeight="bold" fill="#fff" textAnchor="middle" fontFamily="Open Sans, sans-serif">S</text></g> },
  { dots: 1, icon: <g><rect y="3" width="44" height="43" rx="4" fill="#a19a86" /><path d="M6 14q0-2 2-2h10l3 4h15q2 0 2 2v18q0 3-3 3H9q-3 0-3-3z" fill="#fbfbf9" /></g> },
  { dots: 2, icon: <g><path d="M0 12L20 0l16 4 4 14-6 20-20 9L2 38z" fill="#21d789" /><path d="M8 42l30-24 6 16-8 8-14 4z" fill="#dff45a" /><path d="M20 2l14-1 4 12-4 6z" fill="#c8f06a" /><path d="M34 14l12 4-10 12z" fill="#07c3f2" /><rect x="8" y="10" width="28" height="29" fill="#000" /><text x="11" y="24" fontSize="15" fontWeight="bold" fill="#fff" fontFamily="Open Sans, sans-serif">PC</text><rect x="11" y="33" width="11" height="2" fill="#fff" /></g> },
  { dots: 1, icon: <g><circle cx="22" cy="24" r="22" fill="#ececec" /><circle cx="22" cy="24" r="18" fill="#4a4a4a" /><circle cx="22" cy="24" r="12" fill="none" stroke="#ddd" strokeWidth="3" /><circle cx="22" cy="24" r="15" fill="none" stroke="#ddd" strokeWidth="3" strokeDasharray="3.500 4.350" /><circle cx="22" cy="24" r="4" fill="#ddd" /><path d="M22 24l-10-1M22 24l5-9M22 24l5 9" stroke="#ddd" strokeWidth="2.500" /></g> },
  { dots: 1, active: true, icon: <g><circle cx="22" cy="24" r="24" fill="#fbc116" /><path d="M22 24L1.200 12A24 24 0 0 1 42.800 12z" fill="#dc3a2d" /><path d="M22 24L1.200 12A24 24 0 0 0 22 48l8-16z" fill="#2c9a48" /><path d="M22 12h21.500" stroke="#dc3a2d" strokeWidth="2" /><circle cx="22" cy="24" r="12" fill="#fff" /><circle cx="22" cy="24" r="9.500" fill="#1a73e8" /></g> },
  { dots: 2, icon: <g><rect y="6" width="44" height="36" rx="3" fill="#525252" /><text x="6" y="20" fontSize="13" fontWeight="bold" fill="#fff" fontFamily="Liberation Mono, monospace">&gt;_</text></g> },
  { dots: 1, icon: <g><path d="M22 1l20 11v24L22 47 2 36V12z" fill="#c8c8c8" /><path d="M22 1l20 11v24L22 47z" fill="#9d9d9d" /><path d="M11 11h22v7L20 34h13v7H11v-7l12-16H11z" fill="#c3202c" /></g> },
  { dots: 1, icon: <g><rect x="4" y="2" width="36" height="44" rx="4" fill="#f4f4f2" /><path d="M8 11h18M8 16h18M8 21h12M8 26h12" stroke="#b7ad9d" strokeWidth="2" /><rect x="23" y="17" width="13" height="11" fill="#e64b43" /><path d="M26 25c1-6 6-6 4-2s4-1 5 1" stroke="#fff" fill="none" /><path d="M6 34h32M8 34q1 9 7 9t6-8h2q0 8 6 8t7-9" fill="none" stroke="#2a5fa8" strokeWidth="2.500" /></g> },
];

function Dock() {
  return (
    <div className="flex w-[72px] flex-col bg-linear-to-b from-[#471f27] via-[#331a33] to-[#1f1420] pt-[2px]">
      {DOCK.map((d, i) => (
        <div key={i} className="flex h-[68px] items-center pl-1">
          <div className={"flex h-[64px] w-[64px] items-center rounded-[4px] " + (d.active ? "bg-[#52415a]" : "")}>
            <div className="flex w-[7px] flex-col items-center gap-[3px]">
              {Array.from({ length: d.dots }, (_, k) => <div key={k} className="h-[6px] w-[6px] rounded-full bg-[#e95420]" />)}
            </div>
            <svg className="ml-[3px] overflow-visible" width="44" height="48">{d.icon}</svg>
          </div>
        </div>
      ))}
      <div className="ml-[14px] mt-[16px] h-[14px] w-[44px] rounded-t-[5px] bg-linear-to-b from-[#7d7580] to-[#2a1a2a]" />
      <div className="ml-[21px] mt-[20px] grid w-[30px] grid-cols-3 gap-[6px]">
        {Array.from({ length: 9 }, (_, k) => <div key={k} className="h-[6px] w-[6px] rounded-[2px] bg-white" />)}
      </div>
    </div>
  );
}

/* ------------------------------------------------------------------ */
/* Presentation window                                                 */
/* ------------------------------------------------------------------ */

const Slides = () => <div className="h-4 w-4 rounded-[2px] border-x-[3px] border-y-4 border-[#f9b705] bg-white" />;
const YouTube = () => <svg width="16" height="16"><rect y="2" width="16" height="12" rx="3" fill="#f00" /><path d="M6.500 5.500v5l4-2.500z" fill="#fff" /></svg>;

const TABS_A: [string, ReactNode][] = [
  ["FasTODO", <svg width="16" height="16"><rect x="1" width="13" height="16" rx="2" fill="#5aa7ee" /><path d="M3 0v16" stroke="#cfe6fb" strokeWidth="1.500" /></svg>],
  ["Visual Q", <svg width="16" height="14"><path d="M5.500 0h5L16 9.500h-5z" fill="#fbbc04" /><path d="M5.500 0L0 9.500 2.500 14 8 4.500z" fill="#0f9d58" /><path d="M5 9.500h11L13.500 14h-11z" fill="#4285f4" /><path d="M11 9.500h5L13.500 14z" fill="#ea4335" /></svg>],
  ["Visual Q", <Slides />], ["Research", <Slides />], ["Answer", <Slides />],
];
const TABS_B: [string, ReactNode][] = [
  ["Extensio", <YouTube />],
  ["Book O", <svg width="15" height="16"><path d="M1 3q6-4 13 0M1 6q6-3 13 0" stroke="#111" strokeWidth="2" fill="none" /><circle cx="8" cy="9" r="3.500" fill="#fff" stroke="#111" strokeWidth="2" /><path d="M2 14h12" stroke="#ddd" /></svg>],
  ["YouTube", <YouTube />],
  ["Research", <svg width="12" height="16"><circle cx="6" cy="5.500" r="5.500" fill="#fbc94f" /><rect x="4" y="10" width="4" height="5" fill="#9a9a9a" /></svg>],
  ["Service", <div className="h-4 w-4 bg-[#33415e] text-center font-serif text-[10px] italic leading-4 text-white">ln</div>],
  ["Courrier", <svg width="16" height="16"><rect x="5" width="11" height="14" fill="#28a8ea" /><rect y="3" width="10" height="10" rx="1" fill="#0f6cbd" /><circle cx="5" cy="8" r="2.400" fill="none" stroke="#fff" strokeWidth="1.500" /></svg>],
  ["Zimbra:", <svg width="17" height="16"><rect width="13" height="13" fill="#0087c3" /><path d="M3 3h7L3 10h7" fill="none" stroke="#fff" strokeWidth="1.600" /><rect x="7" y="6" width="10" height="10" fill="#e8562a" /><text x="7.500" y="14" fontSize="8" fill="#fff">9+</text></svg>],
  ["Paolo B", <svg width="16" height="16"><path d="M8 0l8 6-8 6-8-6z" fill="#4285f4" /><circle cx="8" cy="10" r="4" fill="#a0c3ff" /><path d="M4 10l4-2 4 2-4 6z" fill="#356ac3" /></svg>],
  ["Chloé L", <div className="flex h-4 w-4 items-center justify-center rounded-full bg-white"><FcGoogle className="text-[12px]" /></div>],
  ["YouTub", <svg width="16" height="16"><circle cx="8" cy="8" r="8" fill="#f00" /><circle cx="8" cy="8" r="4.500" fill="none" stroke="#fff" /><path d="M6.500 5.500v5l4-2.500z" fill="#fff" /></svg>],
  ["Forum E", <svg width="16" height="14"><path d="M1 2h4l1 11z" fill="#2b6cff" /><path d="M12 0h4L9 14H6z" fill="#ff5a1f" /></svg>],
  ["How to", <svg width="14" height="16"><path d="M7 0c6 0 6 6 5 9l-3 2 1 5H5l1-6-4 1C1 5 2 0 7 0z" fill="#111" /></svg>],
];

function BraveTab({ title, icon, w }: { title: string; icon: ReactNode; w: string }) {
  return (
    <div className={"flex h-full shrink-0 items-center justify-between " + w}>
      <div className="flex items-center pl-3">
        <div className="flex w-[17px] justify-center">{icon}</div>
        <div className="ml-[7px] w-[53px] overflow-hidden whitespace-nowrap text-[14px] text-[#b5b3b1] [mask-image:linear-gradient(to_right,#000_70%,transparent)]">{title}</div>
      </div>
      <div className="mt-[7px] h-[23px] w-px bg-[#dcdcdc]" />
    </div>
  );
}

const MENU: [string, number][] = [["Fichier", 43], ["Édition", 44], ["Affichage", 62], ["Insertion", 57], ["Format", 46], ["Diapositive", 71], ["Réorganiser", 76], ["Outils", 37], ["Extensions", 70], ["Aide", 28]];

const Sep = ({ className = "" }: { className?: string }) => <div className={"h-5 w-px shrink-0 bg-[#dadce0] " + className} />;
const Ic = ({ w, children }: { w: string; children: ReactNode }) => <div className={"flex shrink-0 items-center justify-center " + w}>{children}</div>;

/* Simplified drawings inside the film strip previews. */
const thumbLines = (x: number, y: number, w: number, n: number, step: number, c: string) =>
  Array.from({ length: n }, (_, i) => <rect key={x + "-" + y + "-" + i} x={x} y={y + i * step} width={w} height={step * 0.45} fill={c} />);

const MiniGraph = ({ narrow = false }: { narrow?: boolean }) => (
  <svg width="150" height="87" viewBox={narrow ? "1190 1672 2500 745" : "1226 1672 1320 745"} preserveAspectRatio="none">
    <SlideGraph mini />
    {!narrow && <g fill="none" stroke="#bbb" strokeWidth="4"><rect x="2294" y="1677" width="87" height="111" /><rect x="2310" y="1882" width="71" height="68" /><path d="M2300 1700h70M2300 1722h60M2300 1744h74" /></g>}
  </svg>
);

function MatrixThumb({ colors }: { colors: [string, number][] }) {
  const tops = colors.map((_, i) => 16 + colors.slice(0, i).reduce((s, [, h]) => s + h, 0));
  return (
    <g>
      {thumbLines(49, 15, 14, 24, 2.6, "#f6d4d4")}
      {colors.map(([c, h], i) => <rect key={i} x="78" y={tops[i]} width="18" height={h} fill={c} />)}
      {thumbLines(97, 15, 51, 24, 2.6, "#e2e2e2")}
      {thumbLines(78, 16, 18, 23, 2.6, "#0000001c")}
      <rect x="70" y="15" width="8" height="62" fill="#fff" stroke="#ddd" strokeWidth=".5" />
      <rect x="133" y="18" width="9" height="9" fill="#c4c4c4" />
      <path d="M105 24v52M112 30v46M118 38v38M126 50h22M120 58h28M132 66h16" stroke="#999" strokeWidth=".5" />
    </g>
  );
}

const THUMBS: ReactNode[] = [
  <g key="a"><text x="9" y="16" fontSize="5.500" textLength="56">Increasing transparency</text><text x="9" y="23" fontSize="5.500" textLength="121">2) Summary report (e.g. of Marie Boucher use case)</text><rect x="20" y="29" width="76" height="38" fill="#000" />{thumbLines(22, 32, 60, 3, 3.2, "#666")}{thumbLines(30, 42, 56, 4, 3.4, "#555")}{thumbLines(22, 59, 44, 2, 3.4, "#666")}</g>,
  <g key="b"><g fontSize="5.500"><text x="9" y="17">Use case 1 :</text><text x="9" y="24">French</text><text x="9" y="31">merchants of</text><text x="9" y="38">the XVIIth</text><text x="9" y="45">century</text></g><rect x="47" y="6" width="101" height="2" fill="#1a9a3c" /><rect x="47" y="8" width="101" height="5" fill="#dbe8db" /><MatrixThumb colors={[["#f49a94", 26], ["#a8dba0", 15], ["#a9c8e6", 11], ["#d4b8e0", 9]]} />{thumbLines(8, 56, 32, 9, 2.6, "#d5dbe4")}<rect x="8" y="65" width="32" height="2" fill="#f19a94" /></g>,
  <g key="c"><g fontSize="5.500"><text x="9" y="17">Use case 2 :</text><text x="9" y="23">Scientific</text><text x="9" y="29">publications</text></g><MatrixThumb colors={[["#f49a94", 18], ["#98d890", 32], ["#8fc0dd", 4], ["#f8bf7a", 6]]} />{thumbLines(8, 44, 30, 10, 2.7, "#d5dbe4")}<rect x="8" y="57" width="30" height="2" fill="#f19a94" /></g>,
  <text key="d" x="77" y="48" fontSize="7" textAnchor="middle" textLength="89">Discussion and Conclusion</text>,
  <g key="e"><text x="9" y="17" fontSize="5.500" fontWeight="bold" textLength="35">Network Model</text><g fontSize="4" fill="#666"><text x="11" y="33">●</text><text x="17" y="33" textLength="123">Document nodes represent the reality but person nodes are a construction</text><text x="11" y="41">●</text><text x="17" y="41" textLength="94">Does not take into account the uncertainty of the sources</text><text x="11" y="48">●</text><text x="17" y="48" textLength="85">Harder to manipulate for relations outside the event</text></g></g>,
  <g key="f"><rect x="4" y="15" width="49" height="52" fill="#fbc5c5" /><rect x="53" y="15" width="49" height="52" fill="#c79dd0" /><rect x="102" y="15" width="48" height="52" fill="#c5c5fb" />
    {[28, 77, 125].map((cx, k) => (
      <g key={k}>
        {(k === 1 ? [32, 50] : [24, 34, 44, 53]).map((cy) => <g key={cy}><path d={`M${cx - (k === 1 ? 10 : 14)} ${cy}L${cx} 39L${cx + (k === 1 ? 10 : 15)} ${cy}`} stroke={k === 0 ? "#f1b26a" : "#9aa8c8"} fill="none" strokeWidth=".7" /><circle cx={cx - (k === 1 ? 10 : 14)} cy={cy} r="2.500" fill="#ddd" stroke="#999" strokeWidth=".4" /><circle cx={cx + (k === 1 ? 10 : 15)} cy={cy} r="2.500" fill="#ddd" stroke="#999" strokeWidth=".4" /></g>)}
        <rect x={cx - 3} y="33" width="6" height="12" fill="#ddd" stroke="#999" strokeWidth=".4" />
      </g>
    ))}
  </g>,
];

function FilmStrip() {
  return (
    <div className="flex h-[880px] w-[220px] shrink-0 flex-col border-r border-[#dadce0] bg-white">
      <div className="flex h-[840px] overflow-hidden">
        <div className="flex w-[201px] flex-col pt-[4px]">
          {[101, 102, 103, 104, 105, 106, 107, 108, 109].map((n, i) => (
            <div key={n} className={"flex h-[102px] shrink-0 pt-[5px] " + (n === 107 ? "bg-[#fef7e3]" : "")}>
              <div className={"w-[42px] pl-[11px] font-['Roboto',sans-serif] text-[12px] leading-[14px] " + (n === 107 ? "font-medium text-[#202124]" : "text-[#5f6368]")}>
                {n}
                {n === 101 && <svg className="ml-[3px] mt-[6px]" width="18" height="16" fill="none" stroke="#5f6368" strokeWidth="1.500"><circle cx="6" cy="10" r="4.500" /><circle cx="9" cy="8" r="4.500" /><circle cx="12" cy="5.500" r="4.500" /></svg>}
              </div>
              <div className={"h-[91px] w-[155px] overflow-hidden rounded-[4px] bg-white " + (n === 107 ? "border-2 border-[#9aa0a6]" : "border border-[#dadce0]")}>
                {i < 6 && <svg width="153" height="89" fontFamily="Open Sans, sans-serif" fill="#222">{THUMBS[i]}</svg>}
                {n === 107 && <MiniGraph />}
                {n === 108 && <MiniGraph narrow />}
                {n === 109 && <svg width="153" height="89" fontFamily="Open Sans, sans-serif"><text x="9" y="14" fontSize="5.500" fill="#777">Ongoing evaluation</text></svg>}
              </div>
            </div>
          ))}
        </div>
        <div className="ml-[6px] mt-[686px] h-[48px] w-2 rounded-full bg-[#dadce0]" />
      </div>
      <div className="flex h-10 items-center border-t border-[#dadce0]">
        <div className="ml-6 flex h-full w-12 flex-col items-center border-t-[3px] border-black pt-[12px]">
          <svg width="14" height="11" fill="#202124"><path d="M0 0h3v11H0zM4 0h10v5H4zM4 6h10v5H4z" /></svg>
        </div>
        <svg className="ml-[63px]" width="14" height="11" fill="#5f6368"><path d="M0 0h4v5H0zM5 0h4v5H5zM10 0h4v5h-4zM0 6h4v5H0zM5 6h4v5H5zM10 6h4v5h-4z" /></svg>
        <div className="ml-[43px] flex h-6 w-6 items-center justify-center rounded-full bg-[#f1f3f4]"><MdKeyboardArrowLeft className="text-[19px] text-[#3c4043]" /></div>
      </div>
    </div>
  );
}

function HRuler() {
  return (
    <svg className="block shrink-0 bg-[#e8eaed]" width="1573" height="14" viewBox="1092 1639 1573 14" fontFamily="Roboto, sans-serif" fontSize="11" fill="#444" textAnchor="middle">
      <rect x="1092" y="1639" width="13" height="14" fill="#fff" />
      <rect x="1227" y="1640" width="1318" height="13" fill="#fff" />
      {Array.from({ length: 25 }, (_, i) => (
        <g key={i}>
          <text x={1276.2 + 52 * i} y="1650">{i + 1}</text>
          <path d={`M${1251.5 + 52 * i} 1643v7M${1238.5 + 52 * i} 1645v3M${1264.5 + 52 * i} 1645v3`} stroke="#b0b3b8" />
        </g>
      ))}
      <path d="M1092 1639.500H2665M1092 1652.500H2665" stroke="#dadce0" />
    </svg>
  );
}

function VRuler() {
  return (
    <svg className="block shrink-0 bg-[#e8eaed]" width="14" height="778" viewBox="1092 1653 14 778" fontFamily="Roboto, sans-serif" fontSize="11" fill="#444" textAnchor="middle">
      <rect x="1092" y="1673" width="13" height="741" fill="#fff" />
      {Array.from({ length: 14 }, (_, i) => (
        <g key={i}>
          <text transform={`translate(1102.5 ${1722.5 + 52 * i}) rotate(-90)`}>{i + 1}</text>
          <path d={`M1095 ${1697.5 + 52 * i}h7M1097 ${1684.5 + 52 * i}h3M1097 ${1710.5 + 52 * i}h3`} stroke="#b0b3b8" />
        </g>
      ))}
      <path d="M1105.500 1653v778" stroke="#dadce0" />
    </svg>
  );
}

function BottomWindow() {
  const ic = "text-[18px] text-[#444746]";
  return (
    <div className="ml-[800px] flex h-[1080px] w-[1920px] flex-col bg-white">
      <div className="flex h-[27px] shrink-0 items-center bg-[#1d1d1d] font-['Open_Sans',sans-serif] text-[14px] text-[#dedede]">
        <Fit w={62} className="ml-3">Activities</Fit>
        <svg className="ml-[34px]" width="18" height="16"><circle cx="9" cy="8" r="8" fill="#8a8a8a" /><circle cx="9" cy="8" r="3.500" fill="#555" stroke="#eee" strokeWidth="1.500" /></svg>
        <Fit w={104} className="ml-[5px]">Google Chrome</Fit>
        <svg className="ml-[6px]" width="9" height="7"><path d="M0 0h9L4.500 7z" fill="#ddd" /></svg>
        <Fit w={80} className="ml-[705px]">2 déc.  09:13</Fit>
        <Fit w={21} className="ml-[709px]">en₂</Fit>
        <svg className="ml-[5px]" width="9" height="6"><path d="M0 0h9L4.500 6z" fill="#ddd" /></svg>
        <svg className="ml-[33px]" width="15" height="14" fill="#ddd"><path d="M5.500 0h4v4h-4zM0 9h4v5H0zM11 9h4v5h-4zM7 4h1v3h5.500v3h-1V8H2.500v2h-1V7H7z" /></svg>
        <svg className="ml-[14px]" width="15" height="14" fill="#777"><path d="M0 5h3l4-4v12L3 9H0z" /><path d="M9 4q3 3 0 6M12 2q4 5 0 10M1 13L13 1" stroke="#777" fill="none" /></svg>
        <svg className="ml-[12px]" width="16" height="15"><path d="M7 2.500h7v12H7zM9 .5h3v2H9z" fill="none" stroke="#ddd" /><path d="M8.500 8h4v5h-4z" fill="#ddd" /><path d="M3 3L0 8h2l-1 4 4-6H2.500z" fill="#ddd" /></svg>
        <svg className="ml-[11px]" width="9" height="6"><path d="M0 0h9L4.500 6z" fill="#ddd" /></svg>
      </div>
      <div className="flex h-[1053px]">
        <Dock />
        <div className="flex w-[1848px] flex-col">
          <div className="flex h-[30px] shrink-0 items-center bg-[#3f3c3b] font-['Open_Sans',sans-serif]">
            {TABS_A.map(([t, ic2], i) => <BraveTab key={i} title={t} icon={ic2} w={i === 0 ? "w-[95px]" : "w-[90px]"} />)}
            <div className="flex h-full w-[89px] items-center rounded-t-[4px] bg-[#f7f7f7] pl-[6px]">
              <Slides />
              <div className="ml-[8px] w-[34px] overflow-hidden whitespace-nowrap text-[14px] text-[#333] [mask-image:linear-gradient(to_right,#000_70%,transparent)]">Defense</div>
              <MdClose className="ml-[6px] text-[14px] text-[#444]" />
            </div>
            <div className="-ml-1 flex h-full shrink-0">
              {TABS_B.map(([t, ic2], i) => <BraveTab key={i} title={t} icon={ic2} w={i === 0 ? "w-[93px]" : "w-[89px]"} />)}
            </div>
            <div className="ml-[11px] flex h-6 w-6 items-center justify-center rounded-[4px] bg-[#dee1e6]"><MdAdd className="text-[17px] text-white" /></div>
            <div className="ml-[50px] flex h-6 w-6 items-center justify-center rounded-[4px] bg-[#dee1e6]"><MdKeyboardArrowDown className="text-[15px] text-white" /></div>
            <div className="ml-[21px] mt-2 h-px w-2 bg-[#ccc]" />
            <svg className="ml-[31px]" width="9" height="8"><path d="M.5 2.500h5v5h-5zM2.500.5h6v5" fill="none" stroke="#ccc" /></svg>
            <div className="ml-[27px] flex h-5 w-5 items-center justify-center rounded-full bg-[#686664]"><MdClose className="text-[14px] text-white" /></div>
          </div>
          <div className="flex h-[39px] shrink-0 items-center border-b border-[#c8c8c8] bg-[#f7f7f7] font-['Open_Sans',sans-serif]">
            <svg className="ml-[16px]" width="12" height="14"><path d="M11 1v12L1 7z" fill="none" stroke="#c2c2c2" strokeWidth="1.500" /></svg>
            <svg className="ml-[20px]" width="12" height="14"><path d="M1 1v12l10-6z" fill="none" stroke="#c2c2c2" strokeWidth="1.500" /></svg>
            <MdRefresh className="ml-[17px] text-[18px] text-[#444]" />
            <MdOutlineBookmarkBorder className="ml-[216px] text-[18px] text-[#444]" />
            <div className="ml-[13px] flex h-[30px] w-[1080px] shrink-0 items-center rounded-[4px] bg-white pl-[11px] text-[13.500px]">
              <MdLock className="text-[14px] text-[#5f6368]" />
              <Fit w={105} className="ml-[9px] text-black">docs.google.com</Fit>
              <Fit w={693} className="text-[#777]">/presentation/d/1R3GjxKnz0LXey_sgfGKOtKHR5_po0tgdPkFvZHo27jM/edit#slide=id.g71a19738e7a6e0e5_0</Fit>
              <div className="ml-auto h-4 w-px bg-[#bbb]" />
              <svg className="ml-[11px]" width="24" height="20"><path d="M2 2h11l2 4-2 9-5.500 4L2 15 0 6z" fill="#fb542b" /><path d="M4 6h7l-1 6-2.500 3L5 12z" fill="#fff" /><circle cx="18" cy="6" r="6" fill="#5f6473" /><text x="16" y="9" fontSize="8" fill="#fff">2</text></svg>
              <svg className="ml-[10px] mr-[9px]" width="17" height="15"><path d="M8.500 2L15.500 14H1.500z" fill="none" stroke="#662d91" strokeWidth="3" /><path d="M8.500 2L1.500 14" stroke="#ff4724" strokeWidth="3" /></svg>
            </div>
            <svg className="ml-[137px]" width="16" height="16"><circle cx="7" cy="7" r="6" fill="#8a8a8a" /><path d="M4 14L7 5l2 9M10 6l3 8" stroke="#222" fill="none" /></svg>
            <svg className="ml-[16px]" width="16" height="16"><rect width="16" height="10" rx="3" fill="#b6e66c" /><rect y="9" width="16" height="6" rx="2" fill="#7a3f16" /><path d="M5 7q3 3 6 0" stroke="#376b1a" fill="none" strokeWidth="2" /></svg>
            <svg className="ml-[17px]" width="14" height="16"><path d="M.5.5h9l4 4v11h-13z" fill="#e6e6e6" stroke="#aaa" /><rect x="3" y="10" width="8" height="3" fill="#aaa" /></svg>
            <svg className="ml-[17px]" width="16" height="16"><path d="M6 0h9v16H6a8 8 0 0 1 0-16z" fill="#000" /><rect x="6" y="7" width="7" height="5" fill="#fff" /><path d="M7.500 7V5q2-3 4 0v2" fill="none" stroke="#fff" strokeWidth="1.500" /></svg>
            <svg className="ml-[16px]" width="17" height="17"><circle cx="8" cy="9" r="8" fill="#15c39a" /><path d="M11 6a4 4 0 1 0 1 4H8" fill="none" stroke="#fff" strokeWidth="1.500" /><circle cx="13" cy="4" r="3.500" fill="#fff" stroke="#e33" /></svg>
            <svg className="ml-[16px]" width="15" height="16"><path d="M1 11L4 2l3 9M2 8h4M7 13l2 2 4-7" fill="none" stroke="#222" strokeWidth="1.300" /></svg>
            <MdExtension className="ml-[15px] text-[18px] text-[#333]" />
            <MdOutlineAccountBalanceWallet className="ml-[15px] text-[18px] text-[#444]" />
            <MdMenu className="ml-[16px] text-[18px] text-[#444]" />
          </div>
          <div className="flex h-[64px] shrink-0 border-b border-[#dadce0] font-['Roboto',sans-serif]">
            <svg className="ml-[23px] mt-[14px]" width="27" height="36"><path d="M2 0h16l9 9v25a2 2 0 0 1-2 2H2a2 2 0 0 1-2-2V2a2 2 0 0 1 2-2z" fill="#fbbc04" /><path d="M18 0l9 9h-9z" fill="#f29900" /><path d="M6.500 15.500h13v9h-13z" fill="none" stroke="#fff" strokeWidth="2.500" /></svg>
            <div className="ml-[21px] flex flex-col">
              <div className="mt-[9px] flex h-[24px] items-center">
                <Fit w={67} className="text-[18px] text-[#202124]">Defense</Fit>
                <MdStarBorder className="ml-[19px] text-[18px] text-[#5f6368]" /><MdOutlineDriveFileMove className="ml-[12px] text-[18px] text-[#5f6368]" /><MdOutlineCloudDone className="ml-[12px] text-[18px] text-[#5f6368]" />
              </div>
              <div className="mt-[5px] flex h-5 items-center gap-[14.100px] text-[14.500px] text-[#202124]">
                {MENU.map(([t, w]) => <Fit key={t} w={w}>{t}</Fit>)}
                <Fit w={229} className="ml-[7px] text-[14px] text-[#777] underline">Dernière modification il y a 4 minutes</Fit>
              </div>
            </div>
            <div className="ml-auto flex h-[64px] items-center">
              <MdOutlineInsertComment className="text-[22px] text-[#444746]" />
              <div className="ml-[21px] flex h-[36px] w-[54px] items-center justify-center gap-px rounded-full border border-[#dadce0]">
                <svg width="26" height="20"><path d="M0 6l6-6v6z" fill="#ea4335" /><path d="M6 0h12v6H6z" fill="#fbbc04" /><path d="M0 6h6v8H0z" fill="#2684fc" /><path d="M0 14h6v6H2a2 2 0 0 1-2-2z" fill="#0066da" /><path d="M6 14h12v6H6z" fill="#00ac47" /><path d="M12 8l6-4v12l-6-2z" fill="#00832d" /><path d="M18 7l6-5v16l-6-5z" fill="#00ac47" /></svg>
                <svg width="9" height="5"><path d="M0 0h9L4.500 5z" fill="#1a73e8" /></svg>
              </div>
              <div className="ml-3 flex h-[36px] w-[147px] items-center rounded-[4px] border border-[#dadce0] text-[#202124]">
                <MdOutlineSlideshow className="ml-3 text-[17px]" /><Fit w={74} className="ml-[11px] text-[14px] font-medium">Diaporama</Fit>
                <div className="ml-[11px] h-full w-px bg-[#dadce0]" /><MdArrowDropDown className="ml-[1px] text-[18px]" />
              </div>
              <div className="ml-2 flex h-[36px] w-[110px] items-center rounded-[4px] bg-[#fbbc04] text-[#202124]">
                <MdLock className="ml-[13px] text-[14px]" /><Fit w={60} className="ml-[7px] text-[14px] font-medium">Partager</Fit>
              </div>
              <div className="ml-5 mr-5 flex h-8 w-8 items-center justify-center rounded-full bg-[#78909c] text-[16px] text-white">A</div>
            </div>
          </div>
          <div className="flex h-[920px]">
            <div className="flex w-[1793px] flex-col border-r border-[#dadce0]">
              <div className="flex h-[39px] shrink-0 items-center pl-[23px] font-['Roboto',sans-serif] text-[13px] font-medium text-[#444746]">
                <div className="flex h-[26px] w-[45px] shrink-0 items-center bg-[#f1f3f4]"><MdAdd className="ml-[4px] text-[18px]" /><MdArrowDropDown className="ml-[6px] text-[15px]" /></div>
                <Ic w="w-[31px]"><MdUndo className={ic} /></Ic><Ic w="w-[28px]"><MdRedo className={ic} /></Ic><Ic w="w-[26px]"><MdPrint className={ic} /></Ic><Ic w="w-[32px]"><MdFormatPaint className={ic} /></Ic>
                <Sep /><Ic w="w-[38px]"><MdZoomIn className={ic} /></Ic><Ic w="w-[8px]"><MdArrowDropDown className="shrink-0 text-[16px]" /></Ic><Sep className="ml-[9px]" />
                <div className="ml-[5px] flex h-[26px] w-[26px] shrink-0 items-center justify-center rounded-[2px] bg-[#feefc3]"><svg width="12" height="17"><path d="M1 0v14l3.500-3 2.500 6 2.500-1L7 10h5z" fill="#202124" /></svg></div>
                <Ic w="w-[30px]"><svg width="17" height="17" fill="none" stroke="#444746" strokeWidth="1.500"><rect x="2.500" y="2.500" width="12" height="12" /><path d="M5.500 6h6M8.500 6v6" strokeWidth="2" /><path d="M1 1h2v2H1zM14 1h2v2h-2zM1 14h2v2H1zM14 14h2v2h-2z" strokeWidth="1" /></svg></Ic>
                <Ic w="w-[24px]"><MdOutlineImage className={ic} /></Ic><Ic w="w-[10px]"><MdArrowDropDown className="shrink-0 text-[16px]" /></Ic>
                <Ic w="w-[38px]"><svg width="17" height="17" fill="none" stroke="#444746" strokeWidth="1.700"><circle cx="6.500" cy="6.500" r="5.500" /><path d="M14 7h2v9H7v-2" /></svg></Ic>
                <Ic w="w-[22px]"><svg width="16" height="16"><path d="M2 2l12 12" stroke="#444746" strokeWidth="2" /></svg></Ic><Ic w="w-[22px]"><MdArrowDropDown className="text-[16px]" /></Ic>
                <Sep className="ml-[2px]" /><Ic w="w-[38px]"><MdEdit className="text-[16px]" /></Ic><Ic w="w-[22px]"><MdLineWeight className={ic} /></Ic><Ic w="w-[38px]"><MdLineStyle className={ic} /></Ic>
                <Sep /><Ic w="w-[34px]"><MdLink className="text-[20px]" /></Ic><Ic w="w-[24px]"><MdOutlineAddComment className="text-[17px]" /></Ic><Sep className="ml-[6px]" />
                <Ic w="w-[38px]"><MdCrop className={ic} /></Ic><Ic w="w-[6px]"><MdArrowDropDown className="shrink-0 text-[16px]" /></Ic>
                <Ic w="w-[38px]"><svg width="18" height="18" fill="none" stroke="#444746" strokeWidth="1.700"><path d="M1 8V4h13l-3-3M17 8v8H1v-4" /><path d="M4 14l3-4 2 2 2-3 3 5z" fill="#444746" stroke="none" /></svg></Ic>
                <Sep /><Fit w={99} className="ml-[11px]">Remplacer l'image</Fit><Ic w="w-[11px]"><MdArrowDropDown className="shrink-0 text-[16px]" /></Ic>
                <Sep className="ml-[9px]" /><Fit w={138} className="ml-[9px]">Options de mise en forme</Fit><Sep className="ml-[10px]" /><Fit w={38} className="ml-[10px]">Animer</Fit>
                <MdKeyboardArrowUp className="ml-auto mr-[8px] text-[19px]" />
              </div>
              <div className="flex h-[881px]">
                <div className="flex border-t border-[#dadce0]"><FilmStrip /></div>
                <div className="flex w-[1573px] flex-col">
                  <HRuler />
                  <div className="flex h-[778px] shrink-0 bg-[#f8f9fb]"><VRuler /><div className="w-[1558px] overflow-hidden"><SlideCanvas /></div></div>
                  <div className="flex h-[9px] shrink-0 items-center justify-center gap-[4px] border-y border-[#e3e3e3] bg-white pr-[1px]">
                    <div className="h-1 w-1 rounded-full bg-[#dadce0]" /><div className="h-1 w-1 rounded-full bg-[#dadce0]" /><div className="h-1 w-1 rounded-full bg-[#dadce0]" />
                  </div>
                  <div className="flex flex-1 items-start justify-between">
                    <Fit w={357} className="ml-4 mt-[9px] font-['Liberation_Sans',sans-serif] text-[15px] leading-5 text-[#111]">Cliquez pour ajouter les commentaires du présentateur</Fit>
                    <div className="mr-[17px] mt-[35px] flex h-[38px] w-[106px] items-center rounded-[3px] border border-[#dadce0] bg-[#f8f8f8] font-['Roboto',sans-serif] text-[13px] font-medium text-[#777]">
                      <svg className="ml-[13px]" width="18" height="20"><path d="M2 0h14a2 2 0 0 1 2 2v13a2 2 0 0 1-2 2h-4l-3 3-3-3H2a2 2 0 0 1-2-2V2a2 2 0 0 1 2-2z" fill="#fbb605" /><path d="M9 3l1.700 3.800L14.500 8.500l-3.800 1.700L9 14l-1.700-3.800L3.500 8.500l3.800-1.700z" fill="#fff" /></svg>
                      <Fit w={47} className="ml-[11px]">Explorer</Fit>
                    </div>
                  </div>
                </div>
              </div>
            </div>
            <div className="flex w-[55px] flex-col items-center">
              <svg className="mt-[19px]" width="20" height="20"><rect width="20" height="20" rx="2" fill="#4285f4" /><rect x="15" width="5" height="15" fill="#fbbc04" /><rect y="15" width="15" height="5" fill="#34a853" /><path d="M15 20v-5h5z" fill="#ea4335" /><rect x="4" y="4" width="12" height="12" fill="#fff" /><text x="10" y="13.500" fontSize="9" textAnchor="middle" fill="#4285f4" fontFamily="Roboto, sans-serif">31</text></svg>
              <div className="mt-[36px] flex h-5 w-5 items-center justify-center rounded-[3px] bg-[#fbbc04]"><MdLightbulb className="text-[14px] text-white" /></div>
              <svg className="mt-[36px]" width="20" height="20"><circle cx="9.500" cy="10" r="7" fill="#fff" stroke="#2684fc" strokeWidth="4" /><path d="M6 9l3.500 3.500L18 4" fill="none" stroke="#0066da" strokeWidth="3" /></svg>
              <svg className="mt-[36px]" width="18" height="20"><circle cx="9" cy="5" r="4.500" fill="#0b57d0" /><rect x="1" y="11" width="16" height="8" rx="3.500" fill="#0b57d0" /></svg>
              <svg className="mt-[36px]" width="14" height="20"><path d="M7 0a7 7 0 0 1 7 7c0 5-5.500 7-7 13-1.500-6-7-8-7-13a7 7 0 0 1 7-7z" fill="#34a853" /><path d="M7 0a7 7 0 0 0-6 3.500L5 7l6-5.500A7 7 0 0 0 7 0z" fill="#4285f4" /><path d="M1 3.500A7 7 0 0 0 1 10l4-3.500z" fill="#ea4335" /><path d="M1 10l1.500 2L8 8 5 6.500z" fill="#fbbc04" /><circle cx="7" cy="7" r="2.500" fill="#fff" /></svg>
              <div className="mt-[33px] h-px w-5 bg-[#dadce0]" />
              <svg className="mt-[37px]" width="15" height="15"><path d="M7.500 0v15M0 7.500h15" stroke="#202124" strokeWidth="2" /></svg>
              <MdKeyboardArrowRight className="mt-auto mb-[19px] text-[19px] text-[#444746]" />
            </div>
          </div>
        </div>
      </div>
    </div>
  );
}

export default function App() {
  return (
    <div className="flex h-[2520px] w-[3440px] flex-col overflow-hidden bg-black">
      <TopWindow />
      <BottomWindow />
    </div>
  );
}
